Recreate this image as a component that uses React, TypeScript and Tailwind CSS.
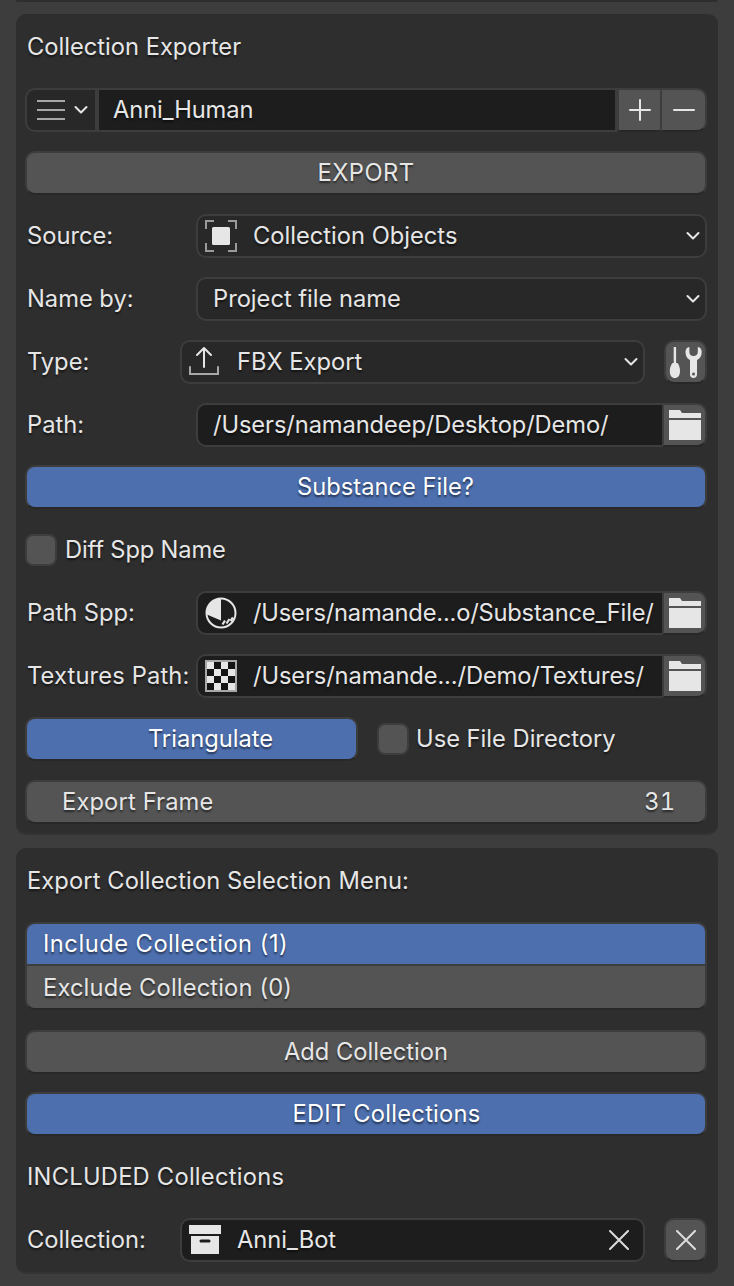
import React from "react";

const shadow = "[text-shadow:0_2px_2px_rgba(0,0,0,0.55)]";
const field = "h-[44px] border-2 border-[#3d3d3d] bg-[#1d1d1d] flex items-center";
const btn = "h-[44px] border-2 border-[#3d3d3d] border-b-[#282828] bg-[#545454] flex items-center justify-center rounded-[10px]";
const blue = "h-[44px] border-2 border-[#3d3d3d] border-b-[#282828] bg-[#4d6fae] flex items-center justify-center rounded-[10px] text-white";

const Chevron = ({ className = "" }: { className?: string }) => (
  <svg width="14" height="10" viewBox="0 0 14 10" className={className} fill="none" stroke="#e6e6e6" strokeWidth="2" strokeLinecap="round" strokeLinejoin="round">
    <path d="M1.5 2 L7 7.5 L12.5 2" />
  </svg>
);

const Plus = () => (
  <svg width="22" height="22" viewBox="0 0 22 22" stroke="#e6e6e6" strokeWidth="2" strokeLinecap="round"><path d="M1 11H21M11 1V21" /></svg>
);
const Minus = () => (
  <svg width="22" height="22" viewBox="0 0 22 22" stroke="#e6e6e6" strokeWidth="2" strokeLinecap="round"><path d="M1 11H21" /></svg>
);
const Cross = () => (
  <svg width="20" height="20" viewBox="0 0 20 20" stroke="#dcdcdc" strokeWidth="2" strokeLinecap="round"><path d="M1 1L19 19M19 1L1 19" /></svg>
);
const Folder = () => (
  <svg width="32" height="30" viewBox="0 0 32 30" fill="#e6e6e6">
    <path d="M0 0H11L13 3H32V8H0Z" />
    <path d="M0 10H32V30H0Z" />
  </svg>
);
const Tools = () => (
  <svg width="33" height="33" viewBox="0 0 33 33" fill="#e6e6e6">
    <rect x="4.700" y="1" width="2.400" height="16" />
    <path d="M3.500 17H8.500C10 19 11 21.500 11 25C11 29.500 9 32 5.800 32C2.700 32 0.800 29.500 0.800 25C0.800 21.500 2 19 3.500 17Z" />
    <path fillRule="evenodd" d="M16.500 6C16.500 10 18 12.500 21 14V28.500C21 30.800 22.500 32 24.500 32C26.500 32 28 30.800 28 28.500V14C31 12.500 32.700 10 32.700 6C32.700 4 32 2.500 30.500 1.500L28.800 1V6C28.800 8.500 27 10 24.500 10C22 10 20.400 8.500 20.400 6V1L18.700 1.500C17.200 2.500 16.500 4 16.500 6Z M24.500 26.500A1.500 1.500 0 1 0 24.501 29.500A1.500 1.500 0 1 0 24.500 26.500Z" />
  </svg>
);
const Rect = () => (
  <svg width="32" height="32" viewBox="0 0 32 32" fill="none">
    <path d="M1 9V1H9M23 1H31V9M1 23V31H9M23 31H31V23" stroke="#9a9a9a" strokeWidth="2" />
    <rect x="7" y="7" width="18" height="18" rx="1.500" fill="#e6e6e6" />
  </svg>
);
const Upload = () => (
  <svg width="30" height="30" viewBox="0 0 30 30" fill="none" strokeLinecap="round">
    <path d="M15 21V2M8 9L15 2L22 9" stroke="#e6e6e6" strokeWidth="2" strokeLinejoin="round" />
    <path d="M1 21V28H29V21" stroke="#a8a8a8" strokeWidth="2" />
  </svg>
);
const Pie = () => (
  <svg width="32" height="32" viewBox="0 0 32 32" fill="none">
    <circle cx="16" cy="16" r="14.500" stroke="#e6e6e6" strokeWidth="2" />
    <path d="M16 1.500A14.500 14.500 0 0 0 1.800 17.500L16 23.500Z" fill="#e6e6e6" />
    <path d="M17.500 27.500L20 23.500M21.500 26.500L24.500 22M25.500 24L28 20.500" stroke="#e6e6e6" strokeWidth="2.200" />
  </svg>
);
const Checker = () => {
  const cells: React.ReactElement[] = [];
  for (let r = 0; r < 4; r++) for (let c = 0; c < 4; c++) {
    if ((r + c) % 2 === 1) cells.push(<rect key={`${r}-${c}`} x={2 + c * 7} y={2 + r * 7} width="7" height="7" fill="#141414" />);
  }
  return (
    <svg width="32" height="32" viewBox="0 0 32 32">
      <rect x="1" y="1" width="30" height="30" fill="#e6e6e6" stroke="#a8a8a8" strokeWidth="2" />
      {cells}
    </svg>
  );
};
const Box = () => (
  <svg width="32" height="32" viewBox="0 0 32 32" fill="#e6e6e6">
    <path d="M0 1H32V10H0Z" />
    <path fillRule="evenodd" d="M2 12H30V30H2Z M12 15.500C11 15.500 10.500 16.300 10.500 17C10.500 17.800 11 18.500 12 18.500H20C21 18.500 21.500 17.800 21.500 17C21.500 16.300 21 15.500 20 15.500Z" />
  </svg>
);
const Hamburger = () => (
  <svg width="28" height="22" viewBox="0 0 28 22" stroke="#a8a8a8" strokeWidth="2"><path d="M0 2H28M0 11H28M0 20H28" /></svg>
);

const Label = ({ children, w }: { children: React.ReactNode; w: string }) => (
  <div className={`${w} shrink-0 pl-[2px]`}>{children}</div>
);

const Select = ({ icon, text }: { icon?: React.ReactNode; text: string }) => (
  <div className={`flex-1 min-w-0 h-[44px] border-2 border-[#3d3d3d] bg-[#282828] rounded-[10px] flex items-center ${icon ? "pl-[7px]" : "pl-[15px]"} pr-[5px]`}>
    {icon && <span className="w-[32px] h-[32px] mr-[16px] shrink-0">{icon}</span>}
    <span className="flex-1">{text}</span>
    <Chevron />
  </div>
);

const PathField = ({ icon, text, tracking }: { icon?: React.ReactNode; text: string; tracking: string }) => (
  <div className="flex-1 min-w-0 flex">
    <div className={`${field} flex-1 min-w-0 rounded-l-[10px] border-r-0 ${icon ? "pl-[7px]" : "pl-[15px]"}`}>
      {icon && <span className="w-[32px] h-[32px] mr-[16px] shrink-0">{icon}</span>}
      <span className={`whitespace-nowrap ${tracking}`}>{text}</span>
    </div>
    <div className="w-[45px] h-[44px] border-2 border-[#3d3d3d] border-b-[#282828] bg-[#545454] rounded-r-[10px] flex items-center justify-center shrink-0">
      <Folder />
    </div>
  </div>
);

const Check = () => (
  <span className="w-[32px] h-[32px] rounded-[8px] border-2 border-[#3d3d3d] bg-[#545454] shrink-0" />
);

export default function App() {
  return (
    <div className={`w-[734px] h-[1286px] overflow-hidden bg-[#3d3d3d] text-[#e6e6e6] text-[23.7px] leading-none ${shadow}`} style={{ fontFamily: "Inter, 'Noto Sans', sans-serif" }}>
      <div className="mx-[16px] h-[2px] bg-[#2e2e2e] rounded-b-[10px] mb-[12px]" />
      <div className="mx-[16px] h-[819px] bg-[#2e2e2e] rounded-[10px] pt-[11px] pl-[9px] pr-[11px] flex flex-col gap-[19px] shadow-[0_2px_0_#333333]">
        <div className="h-[44px] flex items-center pl-[2px]">Collection Exporter</div>

        <div className="h-[44px] flex">
          <div className="w-[72px] h-[44px] border-2 border-[#3d3d3d] bg-[#282828] rounded-l-[10px] flex items-center pl-[10px] gap-[9px] shrink-0">
            <Hamburger />
            <Chevron />
          </div>
          <div className={`${field} flex-1 pl-[14px] tracking-[-0.1px]`}>Anni_Human</div>
          <div className="w-[45px] h-[44px] border-2 border-[#3d3d3d] border-b-[#282828] bg-[#545454] flex items-center justify-center shrink-0"><Plus /></div>
          <div className="w-[45px] h-[44px] border-2 border-l-0 border-[#3d3d3d] border-b-[#282828] bg-[#545454] rounded-r-[10px] flex items-center justify-center shrink-0"><Minus /></div>
        </div>

        <div className={`${btn} tracking-[0.5px]`}>EXPORT</div>

        <div className="h-[44px] flex items-center">
          <Label w="w-[171px]">Source:</Label>
          <Select icon={<Rect />} text="Collection Objects" />
        </div>

        <div className="h-[44px] flex items-center">
          <Label w="w-[171px]">Name by:</Label>
          <Select text="Project file name" />
        </div>

        <div className="h-[44px] flex items-center">
          <Label w="w-[155px]">Type:</Label>
          <Select icon={<Upload />} text="FBX Export" />
          <div className="w-[43px] h-[44px] ml-[19px] border-2 border-[#3d3d3d] border-b-[#282828] bg-[#545454] rounded-[10px] flex items-center justify-center shrink-0">
            <Tools />
          </div>
        </div>

        <div className="h-[44px] flex items-center">
          <Label w="w-[171px]">Path:</Label>
          <PathField text="/Users/namandeep/Desktop/Demo/" tracking="tracking-[-0.1px]" />
        </div>

        <div className={`${blue} -mt-[1px] pl-[39px]`}>Substance File?</div>

        <div className="h-[44px] flex items-center gap-[8px]">
          <Check />
          <span className="tracking-[-0.15px]">Diff Spp Name</span>
        </div>

        <div className="h-[44px] flex items-center">
          <Label w="w-[171px]">Path Spp:</Label>
          <PathField icon={<Pie />} text="/Users/namande...o/Substance_File/" tracking="tracking-[-0.2px]" />
        </div>

        <div className="h-[44px] flex items-center">
          <Label w="w-[171px]"><span className="tracking-[0.15px]">Textures Path:</span></Label>
          <PathField icon={<Checker />} text="/Users/namande.../Demo/Textures/" tracking="tracking-[-0.12px]" />
        </div>

        <div className="h-[44px] flex items-center gap-[19px]">
          <div className={`${blue} w-[333px] shrink-0 pl-[38px]`}>Triangulate</div>
          <div className="flex items-center gap-[7px]">
            <Check />
            <span>Use File Directory</span>
          </div>
        </div>

        <div className={`${btn} !justify-between pl-[35px] pr-[30px]`}>
          <span className="tracking-[0.15px]">Export Frame</span>
          <span className="tabular-nums">31</span>
        </div>
      </div>

      <div className="mx-[16px] mt-[15px] h-[424px] bg-[#2e2e2e] rounded-[10px] pt-[11px] pl-[9px] pr-[11px] flex flex-col shadow-[0_2px_0_#333333]">
        <div className="h-[44px] flex items-center pl-[2px] shrink-0 tracking-[0.1px]">Export Collection Selection Menu:</div>
        <div className="mt-[19px] h-[88px] border-2 border-[#3d3d3d] border-b-[#282828] rounded-[10px] overflow-hidden flex flex-col shrink-0 bg-[#3d3d3d]">
          <div className="h-[40px] bg-[#4d6fae] text-white flex items-center pl-[16px] tracking-[0.5px]">Include Collection (1)</div>
          <div className="mt-[2px] flex-1 bg-[#545454] flex items-center pl-[16px] pt-[1px] tracking-[0.15px]">Exclude Collection (0)</div>
        </div>
        <div className={`${btn} mt-[20px] shrink-0`}>Add Collection</div>
        <div className={`${blue} mt-[18px] shrink-0 pl-[41px] tracking-[0.25px]`}>EDIT Collections</div>
        <div className="mt-[19px] h-[44px] flex items-center pl-[2px] shrink-0 tracking-[0.25px]">INCLUDED Collections</div>
        <div className="mt-[19px] h-[44px] flex items-center shrink-0">
          <Label w="w-[155px]">Collection:</Label>
          <div className={`${field} flex-1 min-w-0 rounded-[10px] pl-[7px] pr-[14px]`}>
            <span className="w-[32px] h-[32px] mr-[16px] shrink-0"><Box /></span>
            <span className="flex-1">Anni_Bot</span>
            <Cross />
          </div>
          <div className="w-[43px] h-[44px] ml-[19px] border-2 border-[#3d3d3d] border-b-[#282828] bg-[#545454] rounded-[10px] flex items-center justify-center shrink-0">
            <Cross />
          </div>
        </div>
      </div>
    </div>
  );
}
